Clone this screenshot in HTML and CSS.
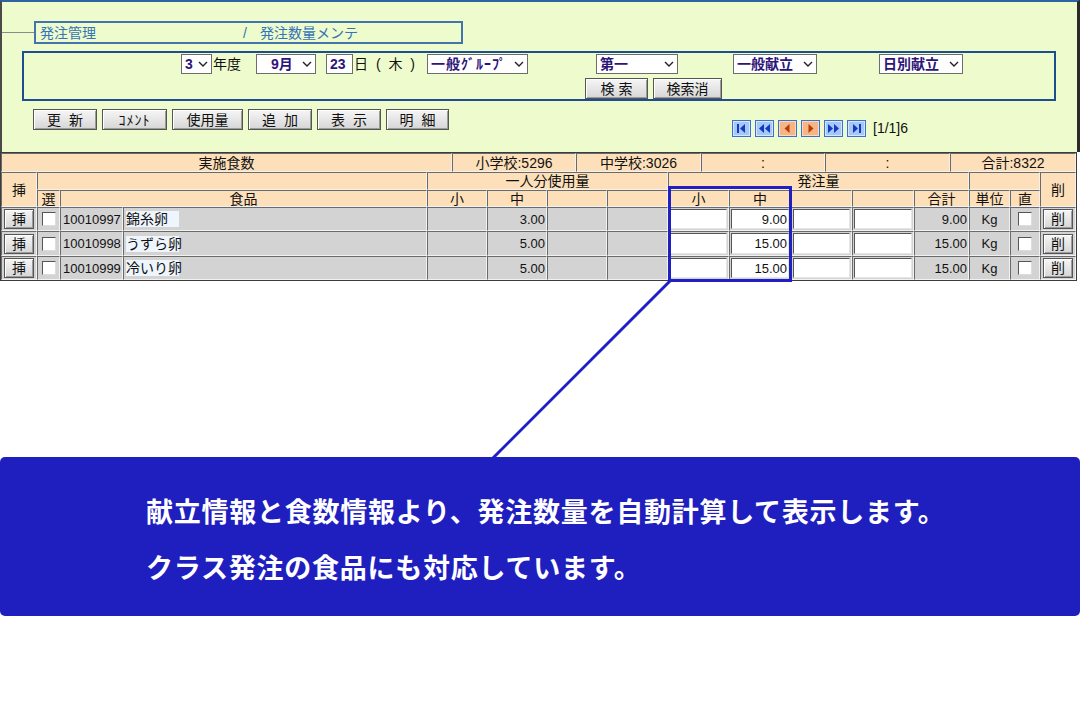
FILE: index.html
```html
<!DOCTYPE html>
<html lang="ja">
<head>
<meta charset="utf-8">
<title>発注数量メンテ</title>
<link rel="stylesheet" href="styles.css">
</head>
<body>
<div class="page">
  <div class="panel">
    <div class="crumb">
      <span class="crumb-line"></span>
      <div class="crumb-box"><span class="c1">発注管理</span><span class="c2">/</span><span>発注数量メンテ</span></div>
    </div>
    <div class="search">
      <div class="srow">
        <span class="sel s-year"><b>3</b><svg class="chev" viewBox="0 0 10 6" width="10" height="6"><path d="M1 1L5 5L9 1" fill="none" stroke="#222" stroke-width="1.4"/></svg></span>
        <span class="lbl l-year">年度</span>
        <span class="sel s-month"><b>9月</b><svg class="chev" viewBox="0 0 10 6" width="10" height="6"><path d="M1 1L5 5L9 1" fill="none" stroke="#222" stroke-width="1.4"/></svg></span>
        <span class="sel s-day"><b>23</b></span>
        <span class="lbl l-dow">日 ( 木 )</span>
        <span class="sel s-grp"><b class="wide">一般ｸﾞﾙｰﾌﾟ</b><svg class="chev" viewBox="0 0 10 6" width="10" height="6"><path d="M1 1L5 5L9 1" fill="none" stroke="#222" stroke-width="1.4"/></svg></span>
        <span class="sel s-no"><b>第一</b><svg class="chev" viewBox="0 0 10 6" width="10" height="6"><path d="M1 1L5 5L9 1" fill="none" stroke="#222" stroke-width="1.4"/></svg></span>
        <span class="sel s-menu"><b>一般献立</b><svg class="chev" viewBox="0 0 10 6" width="10" height="6"><path d="M1 1L5 5L9 1" fill="none" stroke="#222" stroke-width="1.4"/></svg></span>
        <span class="sel s-daily"><b>日別献立</b><svg class="chev" viewBox="0 0 10 6" width="10" height="6"><path d="M1 1L5 5L9 1" fill="none" stroke="#222" stroke-width="1.4"/></svg></span>
      </div>
      <div class="srow2">
        <span class="btn b-find">検 索</span>
        <span class="btn b-clear">検索消</span>
      </div>
    </div>
    <div class="toolbar">
      <div class="btns">
        <span class="btn b1">更&nbsp;&nbsp;新</span>
        <span class="btn b2 wide">ｺﾒﾝﾄ</span>
        <span class="btn b3">使用量</span>
        <span class="btn b4">追&nbsp;&nbsp;加</span>
        <span class="btn b5">表&nbsp;&nbsp;示</span>
        <span class="btn b6">明&nbsp;&nbsp;細</span>
      </div>
      <div class="pager">
        <svg class="pg" viewBox="0 0 19 17" width="19" height="17"><rect x="0.5" y="0.5" width="18" height="16" fill="#a6c8f6" stroke="#3b6fd6"/><rect x="1.5" y="1.5" width="16" height="14" fill="none" stroke="#d6e6ff"/><rect x="5" y="4" width="2" height="9" fill="#1438c4"/><path d="M13 4V13L8 8.5Z" fill="#1438c4"/></svg>
        <svg class="pg" viewBox="0 0 19 17" width="19" height="17"><rect x="0.5" y="0.5" width="18" height="16" fill="#a6c8f6" stroke="#3b6fd6"/><rect x="1.5" y="1.5" width="16" height="14" fill="none" stroke="#d6e6ff"/><path d="M9 4V13L4 8.5Z M15 4V13L10 8.5Z" fill="#1438c4"/></svg>
        <svg class="pg" viewBox="0 0 19 17" width="19" height="17"><rect x="0.5" y="0.5" width="18" height="16" fill="#f5b584" stroke="#3b6fd6"/><rect x="1.5" y="1.5" width="16" height="14" fill="none" stroke="#fbd9bd"/><path d="M11.5 4V13L6.5 8.5Z" fill="#b83a06"/></svg>
        <svg class="pg" viewBox="0 0 19 17" width="19" height="17"><rect x="0.5" y="0.5" width="18" height="16" fill="#f5b584" stroke="#3b6fd6"/><rect x="1.5" y="1.5" width="16" height="14" fill="none" stroke="#fbd9bd"/><path d="M7.5 4V13L12.5 8.5Z" fill="#b83a06"/></svg>
        <svg class="pg" viewBox="0 0 19 17" width="19" height="17"><rect x="0.5" y="0.5" width="18" height="16" fill="#a6c8f6" stroke="#3b6fd6"/><rect x="1.5" y="1.5" width="16" height="14" fill="none" stroke="#d6e6ff"/><path d="M4 4V13L9 8.5Z M10 4V13L15 8.5Z" fill="#1438c4"/></svg>
        <svg class="pg" viewBox="0 0 19 17" width="19" height="17"><rect x="0.5" y="0.5" width="18" height="16" fill="#a6c8f6" stroke="#3b6fd6"/><rect x="1.5" y="1.5" width="16" height="14" fill="none" stroke="#d6e6ff"/><path d="M6 4V13L11 8.5Z" fill="#1438c4"/><rect x="12" y="4" width="2" height="9" fill="#1438c4"/></svg>
        <span class="pg-text">[1/1]6</span>
      </div>
    </div>
  </div>

  <div class="tbl">
    <div class="sum">
      <div class="c h">実施食数</div>
      <div class="c h">小学校:5296</div>
      <div class="c h">中学校:3026</div>
      <div class="c h">:</div>
      <div class="c h">:</div>
      <div class="c h">合計:8322</div>
    </div>
    <div class="grid">
      <div class="c h rs2">挿</div>
      <div class="c h cs3"></div>
      <div class="c h cs4">一人分使用量</div>
      <div class="c h cs5">発注量</div>
      <div class="c h cs2"></div>
      <div class="c h rs2">削</div>

      <div class="c h">選</div>
      <div class="c h cs2">食品</div>
      <div class="c h">小</div>
      <div class="c h">中</div>
      <div class="c h"></div>
      <div class="c h"></div>
      <div class="c h">小</div>
      <div class="c h">中</div>
      <div class="c h"></div>
      <div class="c h"></div>
      <div class="c h">合計</div>
      <div class="c h">単位</div>
      <div class="c h">直</div>

      <div class="c d"><span class="btn sm">挿</span></div>
      <div class="c d"><span class="chk"></span></div>
      <div class="c d l num">10010997</div>
      <div class="c d l"><span class="nm">錦糸卵</span></div>
      <div class="c d"></div>
      <div class="c d r num">3.00</div>
      <div class="c d"></div>
      <div class="c d"></div>
      <div class="c d"><span class="inp"></span></div>
      <div class="c d"><span class="inp num">9.00</span></div>
      <div class="c d"><span class="inp"></span></div>
      <div class="c d"><span class="inp"></span></div>
      <div class="c d r num">9.00</div>
      <div class="c d num">Kg</div>
      <div class="c d"><span class="chk"></span></div>
      <div class="c d"><span class="btn sm">削</span></div>

      <div class="c d"><span class="btn sm">挿</span></div>
      <div class="c d"><span class="chk"></span></div>
      <div class="c d l num">10010998</div>
      <div class="c d l"><span class="nm">うずら卵</span></div>
      <div class="c d"></div>
      <div class="c d r num">5.00</div>
      <div class="c d"></div>
      <div class="c d"></div>
      <div class="c d"><span class="inp"></span></div>
      <div class="c d"><span class="inp num">15.00</span></div>
      <div class="c d"><span class="inp"></span></div>
      <div class="c d"><span class="inp"></span></div>
      <div class="c d r num">15.00</div>
      <div class="c d num">Kg</div>
      <div class="c d"><span class="chk"></span></div>
      <div class="c d"><span class="btn sm">削</span></div>

      <div class="c d"><span class="btn sm">挿</span></div>
      <div class="c d"><span class="chk"></span></div>
      <div class="c d l num">10010999</div>
      <div class="c d l"><span class="nm">冷いり卵</span></div>
      <div class="c d"></div>
      <div class="c d r num">5.00</div>
      <div class="c d"></div>
      <div class="c d"></div>
      <div class="c d"><span class="inp"></span></div>
      <div class="c d"><span class="inp num">15.00</span></div>
      <div class="c d"><span class="inp"></span></div>
      <div class="c d"><span class="inp"></span></div>
      <div class="c d r num">15.00</div>
      <div class="c d num">Kg</div>
      <div class="c d"><span class="chk"></span></div>
      <div class="c d"><span class="btn sm">削</span></div>
    </div>
  </div>

  <div class="focus"></div>
  <svg class="leader" width="1080" height="720" viewBox="0 0 1080 720"><line x1="670" y1="281" x2="493" y2="458" stroke="#2020c2" stroke-width="3"/></svg>

  <div class="callout">
    <p>献立情報と食数情報より、発注数量を自動計算して表示します。</p>
    <p>クラス発注の食品にも対応しています。</p>
  </div>
</div>
</body>
</html>
```

FILE: styles.css
```css
* { box-sizing: border-box; }
body {
  margin: 0;
  background: #ffffff;
  font-family: "Liberation Sans", "Noto Sans CJK JP", sans-serif;
  font-size: 14px;
  color: #111;
}
.page { position: relative; width: 1080px; height: 720px; }

.panel {
  height: 152px;
  background: #eefbcd;
  border-top: 2px solid #2e64a4;
  border-left: 2px solid #4a4a4a;
  border-right: 3px solid #2a2a2a;
  overflow: hidden;
}
.crumb { display: flex; align-items: center; margin-top: 19px; height: 23px; }
.crumb-line { width: 32px; height: 1px; background: #8a8a8a; }
.crumb-box {
  width: 429px; height: 23px;
  border: 2px solid #4474ac;
  display: flex; align-items: center;
  padding-left: 4px;
  color: #3574b6; font-size: 14px; line-height: 1;
}
.c1 { width: 203px; }
.c2 { width: 17px; }

.search {
  margin: 7px 0 0 20px;
  width: 1034px; height: 50px;
  border: 2px solid #1d4f90;
  padding-top: 1px;
}
.srow { display: flex; align-items: center; height: 20px; line-height: 1; }
.sel {
  height: 20px;
  display: flex; align-items: center; justify-content: space-between;
  background: #fff;
  border: 1px solid #6d6d6d;
  padding: 0 3px 0 3px;
  color: #2c1478;
  font-size: 14px;
}
.sel b { font-weight: bold; white-space: nowrap; }
.wide { letter-spacing: 1px; }
.chev { flex: none; }
.lbl { font-size: 14px; white-space: nowrap; color: #111; }
.s-year { width: 31px; margin-left: 157px; }
.l-year { width: 29px; margin-left: 1px; }
.s-month { width: 60px; margin-left: 14px; padding-left: 14px; }
.s-day { width: 27px; margin-left: 10px; }
.l-dow { width: 72px; margin-left: 1px; letter-spacing: 2px; }
.s-grp { width: 101px; margin-left: 1px; }
.s-no { width: 82px; margin-left: 68px; }
.s-menu { width: 84px; margin-left: 55px; }
.s-daily { width: 84px; margin-left: 62px; }

.srow2 { display: flex; gap: 5px; margin-top: 4px; height: 21px; padding-left: 561px; }

.btn {
  display: inline-flex; align-items: center; justify-content: center;
  height: 21px;
  border: 1px solid #555;
  background: linear-gradient(#f6f6f6, #d6d6d6);
  box-shadow: inset 1px 1px 0 #ffffff, inset -1px -1px 0 #9c9c9c;
  font-size: 14px; line-height: 1; color: #111;
  white-space: nowrap;
}
.b-find { width: 63px; }
.b-clear { width: 69px; }

.toolbar { display: flex; align-items: flex-start; margin-top: 8px; padding-left: 31px; }
.btns { display: flex; gap: 5px; }
.b1 { width: 64px; }
.b2 { width: 65px; }
.b3 { width: 71px; }
.b4 { width: 64px; }
.b5 { width: 64px; }
.b6 { width: 63px; }
.pager { display: flex; align-items: center; gap: 4px; margin-left: 283px; margin-top: 11px; }
.pg { display: block; }
.pg-text { margin-left: 3px; font-size: 14px; line-height: 17px; color: #111; }

.tbl {
  width: 1077px;
  border: 1px solid #3c3c3c;
  background: #9a9a9a;
}
.sum {
  display: grid;
  grid-template-columns: 451px 124px 125px 124px 125px 126px;
  grid-template-rows: 19px;
}
.grid {
  display: grid;
  grid-template-columns: 36px 23px 63px 304px 60px 60px 60px 61px 61px 62px 61px 62px 55px 41px 30px 36px;
  grid-template-rows: 18px 17px 24px 25px 24px;
}
.c {
  border: 1px solid;
  border-color: #6a6a6a #f2f2f2 #f2f2f2 #6a6a6a;
  display: flex; align-items: center; justify-content: center;
  overflow: hidden; white-space: nowrap;
  font-size: 14px; line-height: 1;
}
.h { background: #fde0b9; color: #111; }
.d { background: #d3d3d3; font-size: 13px; }
.l { justify-content: flex-start; padding-left: 2px; }
.r { justify-content: flex-end; padding-right: 1px; }
.num { font-family: "Liberation Sans", sans-serif; font-size: 13px; }
.rs2 { grid-row: span 2; }
.cs2 { grid-column: span 2; }
.cs3 { grid-column: span 3; }
.cs4 { grid-column: span 4; }
.cs5 { grid-column: span 5; }

.btn.sm { width: 30px; height: 20px; font-size: 14px; }
.chk {
  width: 14px; height: 14px;
  background: #fff;
  border: 1px solid;
  border-color: #555 #dcdcdc #dcdcdc #555;
}
.nm { display: inline-block; width: 53px; background: #eef5fd; font-size: 14px; line-height: 16px; }
.inp {
  align-self: stretch;
  flex: 1;
  margin: 1px;
  background: #fff;
  border: 1px solid;
  border-color: #555 #e6e6e6 #e6e6e6 #555;
  display: flex; align-items: center; justify-content: flex-end;
  padding-right: 1px;
}

.focus {
  position: absolute;
  left: 668px; top: 186px;
  width: 124px; height: 96px;
  border: 3px solid #2020c2;
}
.leader { position: absolute; left: 0; top: 0; pointer-events: none; }

.callout {
  margin-top: 176px;
  height: 159px;
  background: #1f1fbf;
  border-radius: 5px;
  padding: 26px 0 0 146px;
  color: #fff;
  font-family: "Noto Sans CJK JP", sans-serif;
  font-weight: bold;
  font-size: 27px;
  letter-spacing: 0.75px;
  line-height: 56px;
}
.callout p { margin: 0; white-space: nowrap; }
```
